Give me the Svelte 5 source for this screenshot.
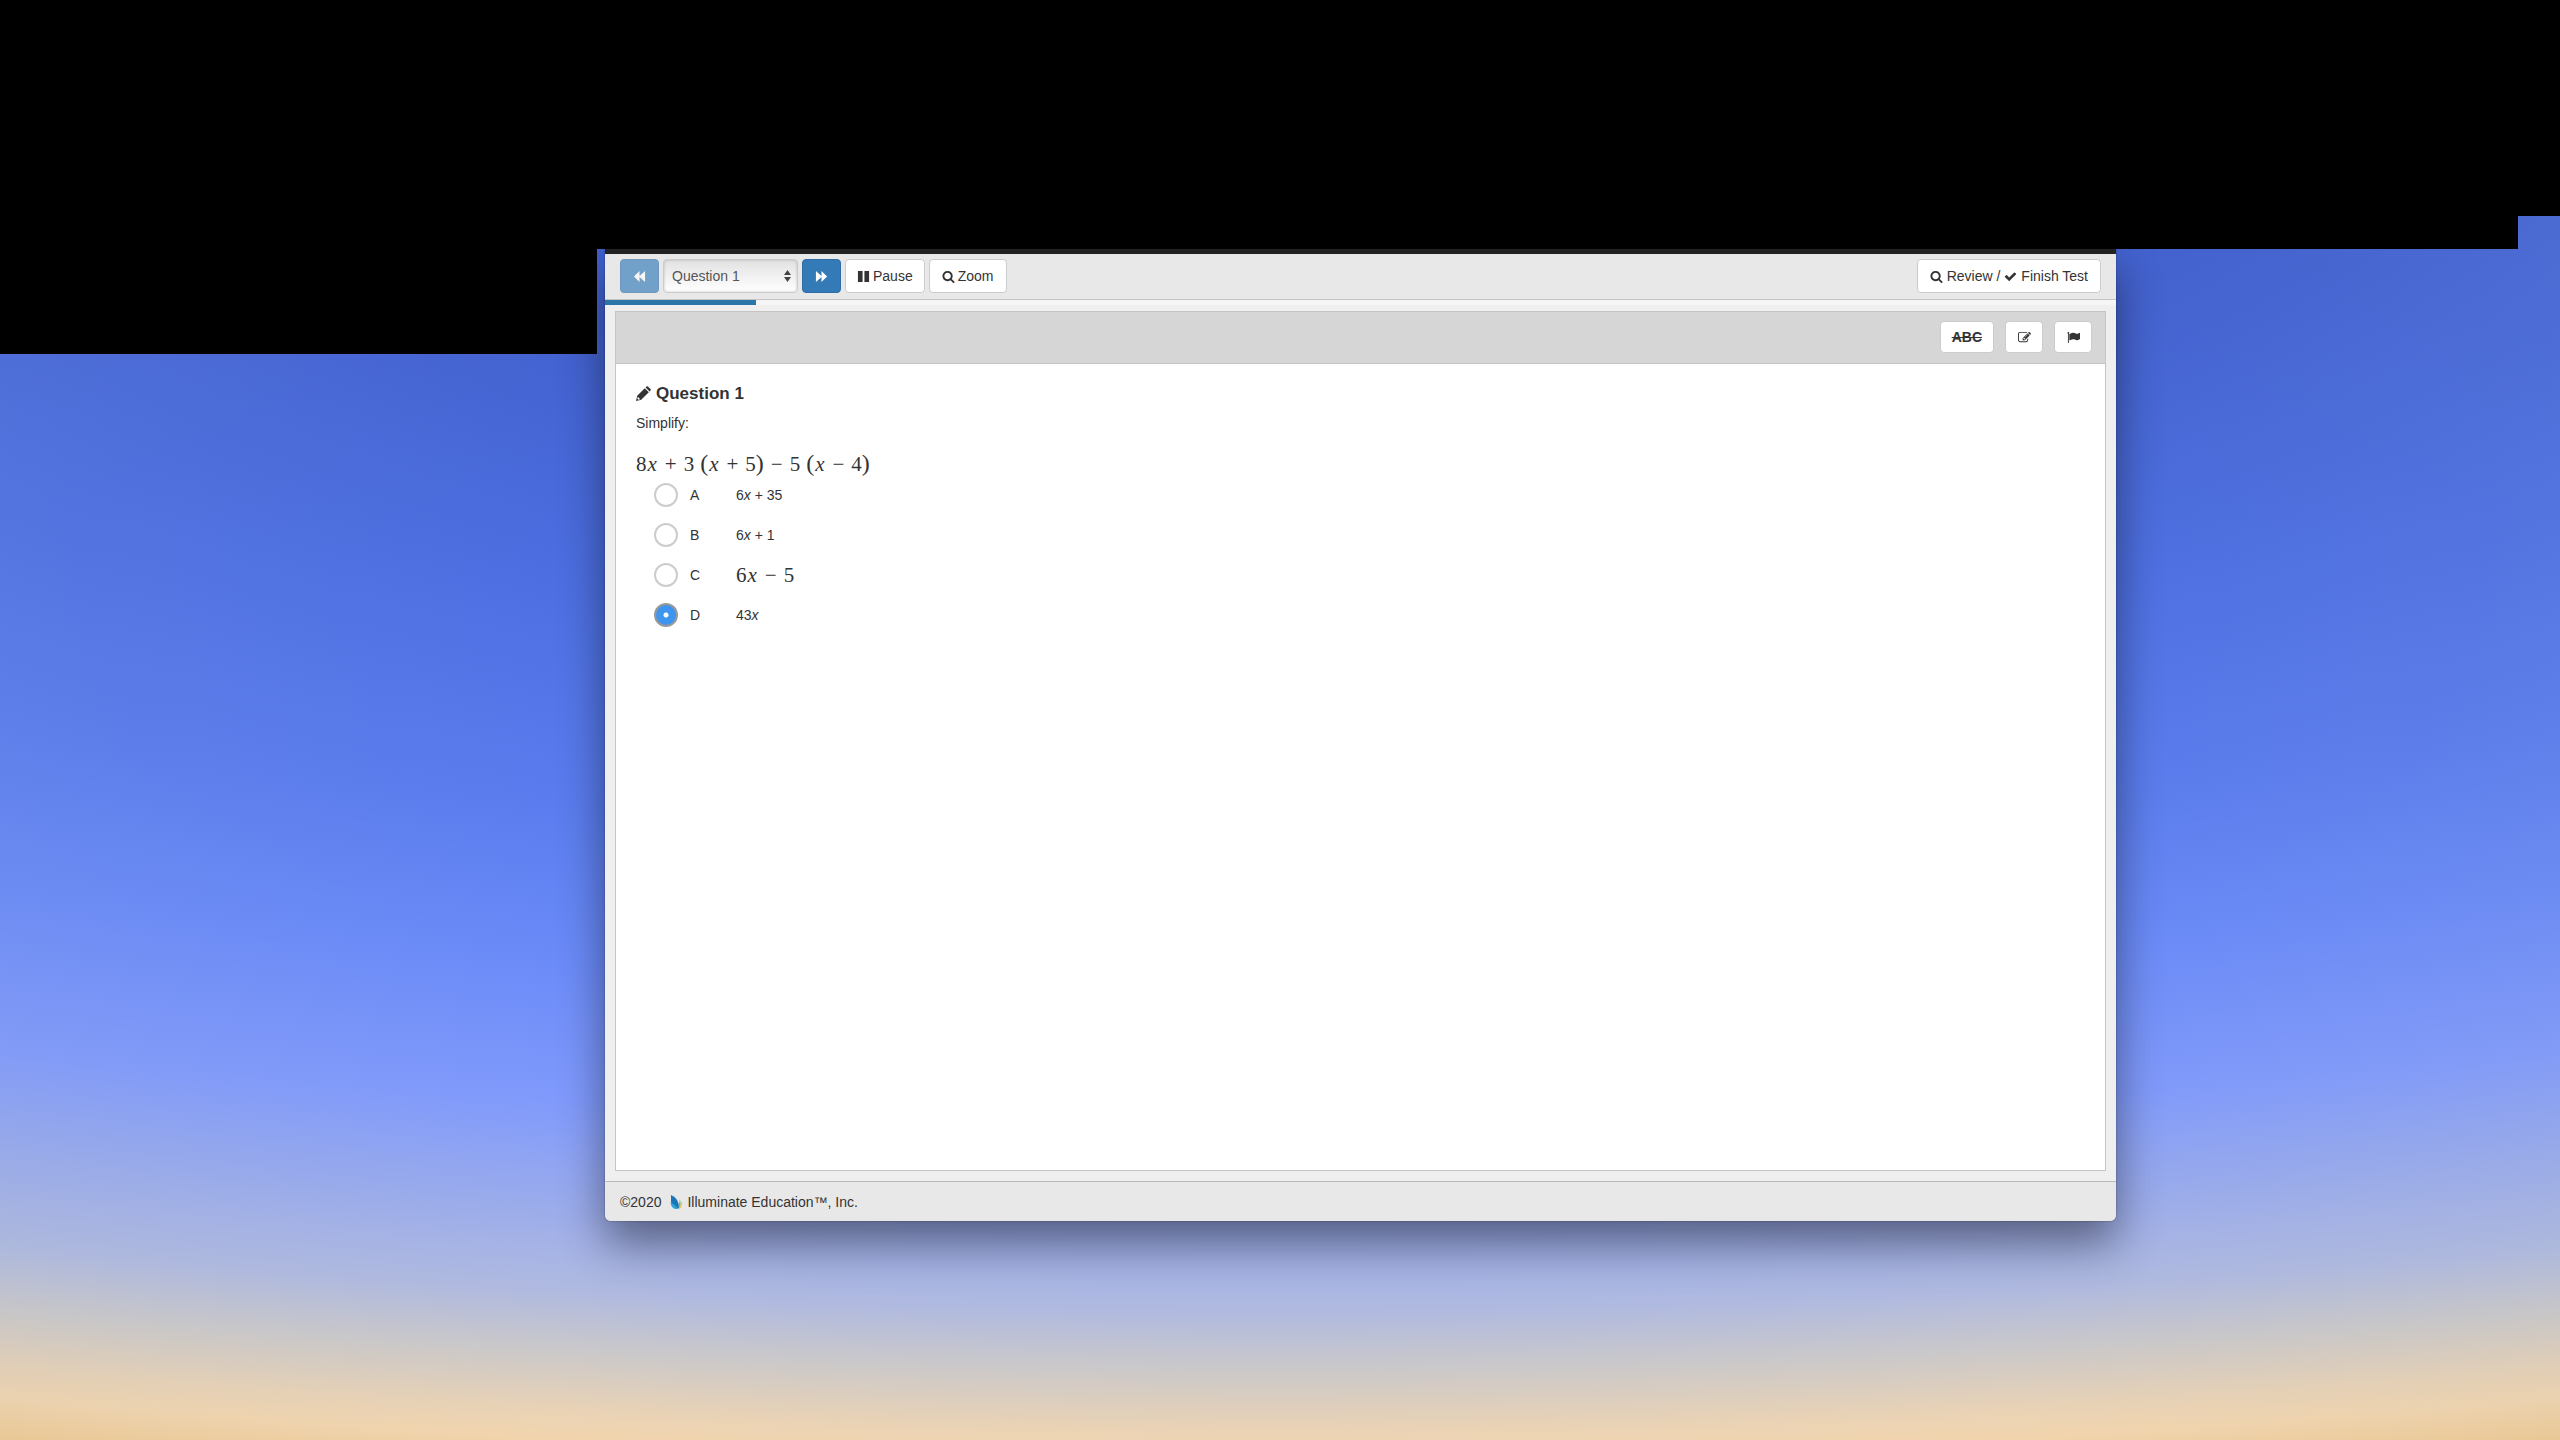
<script lang="ts">
  const questions = Array.from({ length: 10 }, (_, i) => `Question ${i + 1}`);

  const choices = [
    { key: 'A', coef: '6', rest: '+ 35', math: false },
    { key: 'B', coef: '6', rest: '+ 1', math: false },
    { key: 'C', coef: '6', rest: '5', math: true },
    { key: 'D', coef: '43', rest: '', math: false }
  ];

  let current = $state('Question 1');
  let answer = $state('D');
  let progress = $derived((questions.indexOf(current) + 1) * 10);
</script>

{#snippet search()}
  <svg class="icon" viewBox="0 0 1792 1792" aria-hidden="true">
    <path d="M1216 832q0-185-131.500-316.500t-316.500-131.500-316.500 131.500-131.500 316.500 131.500 316.500 316.500 131.500 316.500-131.500 131.500-316.500zm512 832q0 52-38 90t-90 38q-54 0-90-38l-343-342q-179 124-399 124-143 0-273.500-55.500t-225-150-150-225-55.500-273.500 55.500-273.500 150-225 225-150 273.500-55.500 273.500 55.500 225 150 150 225 55.500 273.500q0 220-124 399l343 343q37 37 37 90z" />
  </svg>
{/snippet}

<div class="desktop">
  <div class="mask-top"></div>
  <div class="mask-row">
    <div class="mask-fill"></div>
    <div class="mask-gap"></div>
  </div>
  <div class="mask-side"></div>

  <div class="window">
    <header class="toolbar">
      <button class="btn primary" type="button" disabled aria-label="Previous question">
        <svg class="icon" viewBox="0 0 14 14" aria-hidden="true"><path d="M7 1v5.500L13 1v12L7 7.500V13L1 7z" /></svg>
      </button>
      <select class="picker" aria-label="Question" bind:value={current}>
        {#each questions as q}
          <option value={q}>{q}</option>
        {/each}
      </select>
      <button class="btn primary" type="button" aria-label="Next question">
        <svg class="icon" viewBox="0 0 14 14" aria-hidden="true"><path d="M7 1v5.500L1 1v12l6-5.500V13l6-6z" /></svg>
      </button>
      <button class="btn" type="button">
        <svg class="icon" viewBox="0 0 14 14" aria-hidden="true"><path d="M1 1h5v12H1zM8 1h5v12H8z" /></svg>
        Pause
      </button>
      <button class="btn wide" type="button">{@render search()} Zoom</button>
      <button class="btn wide finish" type="button">
        {@render search()} Review /
        <svg class="icon" viewBox="0 0 1792 1792" aria-hidden="true">
          <path d="M1671 566q0 40-28 68l-724 724-136 136q-28 28-68 28t-68-28l-136-136-362-362q-28-28-28-68t28-68l136-136q28-28 68-28t68 28l294 295 656-657q28-28 68-28t68 28l136 136q28 28 28 68z" />
        </svg>
        Finish Test
      </button>
    </header>
    <div class="progress"><div class="bar" style={`width: ${progress}%`}></div></div>

    <main class="panel">
      <div class="tools">
        <button class="tool strike" type="button">ABC</button>
        <button class="tool" type="button" aria-label="Notes">
          <svg class="icon" viewBox="0 0 1792 1792" aria-hidden="true">
            <path d="M888 1184l116-116-152-152-116 116v56h96v96h56zm440-720q-16-16-33 1l-350 350q-17 17-1 33t33-1l350-350q17-17 1-33zm80 594v190q0 119-84.500 203.500t-203.500 84.500h-832q-119 0-203.500-84.500t-84.500-203.500v-832q0-119 84.500-203.500t203.500-84.500h832q63 0 117 25 15 7 18 23 3 17-9 29l-49 49q-14 14-32 8-23-6-45-6h-832q-66 0-113 47t-47 113v832q0 66 47 113t113 47h832q66 0 113-47t47-113v-126q0-13 9-22l64-64q15-15 35-7t20 29zm-96-738l288 288-672 672h-288v-288zm444 132l-92 92-288-288 92-92q28-28 68-28t68 28l152 152q28 28 28 68t-28 68z" />
          </svg>
        </button>
        <button class="tool" type="button" aria-label="Flag question">
          <svg class="icon" viewBox="0 0 1792 1792" aria-hidden="true">
            <path d="M320 256q0 72-64 110v1266q0 13-9.500 22.500t-22.500 9.500h-64q-13 0-22.500-9.500t-9.500-22.500v-1266q-64-38-64-110 0-53 37.500-90.500t90.500-37.500 90.500 37.500 37.500 90.500zm1472 64v763q0 25-12.500 38.500t-39.500 27.500q-215 116-369 116-61 0-123.500-22t-108.500-48-115.500-48-142.500-22q-192 0-464 146-17 9-33 9-26 0-45-19t-19-45v-742q0-32 31-55 21-14 79-43 236-120 421-120 107 0 200 29t219 88q38 19 88 19 54 0 117.500-21t110-47 88-47 54.500-21q26 0 45 19t19 45z" />
          </svg>
        </button>
      </div>

      <div class="body">
        <h1>
          <svg class="pencil" viewBox="0 0 16 16" aria-hidden="true">
            <path d="M0 15l1.200-5.200L8.800 2.200l4 4L5.200 13.800zM9.600 1.400l.9-.9q.7-.7 1.400 0l2.600 2.600q.7.700 0 1.400l-.9.900z" />
            <path class="shine" d="M1.800 10.800l2.400 2.400-1.800.5-1.100-1.100z" />
          </svg>
          {current}
        </h1>
        <p>Simplify:</p>
        <div class="math">
          8<i>x</i><b>+</b>3<span class="paren open">(</span><i>x</i><b>+</b>5<span class="paren">)</span><b>−</b>5<span class="paren open">(</span><i>x</i><b>−</b>4<span class="paren">)</span>
        </div>
        <div class="choices" role="radiogroup" aria-label="Answer choices">
          {#each choices as c}
            <label class="choice">
              <input type="radio" name="answer" value={c.key} bind:group={answer} />
              <span class="key">{c.key}</span>
              {#if c.math}
                <span class="math">{c.coef}<i>x</i><b>−</b>{c.rest}</span>
              {:else}
                <span>{c.coef}<i>x</i> {c.rest}</span>
              {/if}
            </label>
          {/each}
        </div>
      </div>
    </main>

    <footer>
      <span>©2020</span>
      <svg class="logo" viewBox="0 0 14 16" aria-hidden="true">
        <path fill="#1976b5" d="M2 1q8 3 8 13.500Q3 13 2 8z" />
        <path fill="#29a3dc" d="M1.500 8q4 2 8 7Q2 16 1.500 8z" />
        <path fill="#6fb55b" d="M11 5q1.500 5-.5 10Q9.500 9 11 5z" />
        <path fill="#e8c34a" d="M13 7q.8 5-2.500 8.500Q11 11 13 7z" />
      </svg>
      <span>Illuminate Education™, Inc.</span>
    </footer>
  </div>
</div>

<style>
  :global(body) {
    margin: 0;
  }

  .desktop {
    box-sizing: border-box;
    min-height: 100vh;
    overflow: hidden;
    background:
      linear-gradient(
        90deg,
        rgba(150, 165, 180, 0.08),
        transparent 22%,
        transparent 78%,
        rgba(150, 165, 180, 0.08)
      ),
      radial-gradient(
        ellipse 180% 100% at 50% 0,
        #3a58c4 0,
        #4261cf 27%,
        #4d6fe2 44%,
        #5a7cee 58%,
        #6a8af8 68%,
        #809afc 78%,
        #9aabec 85%,
        #b0bae0 91%,
        #cac8ca 95%,
        #e8d2b6 99%,
        #f2d5ae 101%,
        #f0ca90 104%
      );
    color: #333;
    font-family: "Liberation Sans", Arial, sans-serif;
    font-size: 14px;
    line-height: 20px;
  }

  .mask-top {
    height: 216px;
    background: #000;
  }

  .mask-row {
    display: flex;
    height: 33px;
  }

  .mask-fill {
    flex: 1;
    background: #000;
  }

  .mask-gap {
    width: 42px;
  }

  .mask-side {
    float: left;
    width: 597px;
    height: 105px;
    background: #000;
  }

  .window {
    display: flex;
    flex-direction: column;
    box-sizing: border-box;
    min-height: 972px;
    margin: 0 444px 0 605px;
    overflow: hidden;
    border-top: 5px solid #222;
    border-radius: 0 0 6px 6px;
    background: #efefef;
    box-shadow: 0 0 2px rgba(0, 0, 0, 0.4), 0 22px 45px rgba(0, 0, 0, 0.45);
  }

  .toolbar {
    display: flex;
    gap: 4px;
    padding: 5px 15px 6px;
    border-bottom: 1px solid #c4c4c4;
    background: #e8e8e8;
  }

  .btn,
  .tool {
    display: flex;
    align-items: center;
    justify-content: center;
    gap: 3px;
    box-sizing: border-box;
    padding: 0 11px;
    border: 1px solid #ccc;
    border-radius: 4px;
    background: #fff;
    color: #333;
    font: inherit;
    cursor: pointer;
  }

  .btn {
    height: 34px;
  }

  .primary {
    width: 39px;
    border-color: #2e6da4;
    background: #337ab7;
    color: #fff;
  }

  .primary:disabled {
    opacity: 0.65;
  }

  .wide {
    padding: 0 12px;
  }

  .finish {
    gap: 4px;
    margin-left: auto;
  }

  .icon {
    width: 13px;
    height: 13px;
    fill: currentColor;
  }

  .picker {
    box-sizing: border-box;
    width: 135px;
    height: 34px;
    padding: 0 8px;
    appearance: none;
    border: 1px solid #ccc;
    border-radius: 4px;
    background:
      url("data:image/svg+xml,%3Csvg xmlns='http://www.w3.org/2000/svg' viewBox='0 0 7 12'%3E%3Cpath fill='%23444' d='M0 5l3.500-5L7 5zM0 7h7l-3.500 5z'/%3E%3C/svg%3E") right 6px center / 7px 12px no-repeat,
      linear-gradient(#e2e2e2, #fff);
    box-shadow: inset 0 0 3px rgba(0, 0, 0, 0.2);
    color: #555;
    font: inherit;
  }

  .progress {
    height: 5px;
    background: #f5f5f5;
  }

  .bar {
    height: 100%;
    background: #2a76a8;
  }

  .panel {
    flex: 1;
    margin: 6px 10px 10px;
    border: 1px solid #c4c4c4;
    background: #fff;
  }

  .tools {
    display: flex;
    justify-content: flex-end;
    gap: 11px;
    padding: 9px 13px 10px;
    border-bottom: 1px solid #c4c4c4;
    background: #d6d6d6;
  }

  .tool {
    min-width: 38px;
    height: 32px;
  }

  .strike {
    font-weight: 700;
    text-decoration: line-through;
  }

  .body {
    padding: 20px;
  }

  h1 {
    display: flex;
    align-items: center;
    gap: 4px;
    margin: 0 0 9px;
    font-size: 17px;
    line-height: 20px;
  }

  .pencil {
    width: 16px;
    height: 16px;
    fill: #333;
  }

  .shine {
    fill: #fff;
  }

  p {
    margin: 0 0 20px;
  }

  .math {
    font-family: "Liberation Serif", "Times New Roman", serif;
    font-size: 21px;
    line-height: 20px;
  }

  .math i {
    margin: 0 1px;
  }

  .math b {
    margin: 0 7px;
    font-weight: 400;
  }

  .paren {
    font-size: 24px;
  }

  .open {
    margin-left: 6px;
  }

  .choices {
    padding: 1px 18px;
  }

  .choice {
    display: flex;
    align-items: center;
    height: 40px;
  }

  .choice input {
    box-sizing: border-box;
    width: 24px;
    height: 24px;
    margin: 0;
    appearance: none;
    border: 2px solid #ccc;
    border-radius: 50%;
    background: #fff;
  }

  .choice input:checked {
    border-color: #999;
    background: radial-gradient(circle, #fff 2px, #3e95ef 3px);
  }

  .key {
    width: 46px;
    margin-left: 12px;
  }

  footer {
    display: flex;
    align-items: center;
    gap: 4px;
    height: 39px;
    padding: 0 15px;
    border-top: 1px solid #bbb;
    background: #e8e8e8;
  }

  .logo {
    width: 14px;
    height: 16px;
    margin-left: 4px;
  }
</style>
